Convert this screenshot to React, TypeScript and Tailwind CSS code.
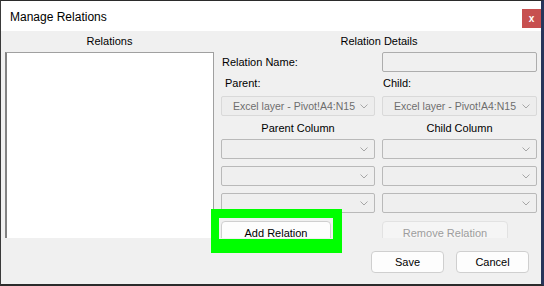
import React from 'react';

const font = { fontFamily: '"Liberation Sans", Arial, sans-serif' };

// Chevron of a Windows combo box
const Chevron: React.FC = () => (
  <svg width="8" height="5" viewBox="0 0 8 5" className="shrink-0">
    <polyline points="0.5,0.5 4,4 7.5,0.5" fill="none" stroke="#a6a6a6" strokeWidth="1" />
  </svg>
);

const Combo: React.FC<{ text?: string; muted?: boolean }> = ({ text, muted }) => (
  <div
    className={`h-[20px] rounded-[2px] border flex items-center justify-between pl-[11px] pr-[6px] ${
      muted ? 'border-[#d9d9d9] bg-[#ededed]' : 'border-[#b9b9b9] bg-[#efefef]'
    }`}
  >
    <span className="text-[#6d6d6d] text-[10.5px] whitespace-nowrap">{text}</span>
    <Chevron />
  </div>
);

const Button: React.FC<{ label: string; disabled?: boolean; className?: string }> = ({ label, disabled, className }) => (
  <div
    className={`h-[22px] rounded-[4px] border flex items-center justify-center ${
      disabled ? 'border-[#e2e2e2] bg-[#f5f5f5] text-[#9d9d9d]' : 'border-[#cfcfcf] bg-[#fdfdfd] text-black'
    } ${className ?? ''}`}
  >
    {label}
  </div>
);

export default function App() {
  return (
    <div
      className="relative w-[544px] h-[286px] flex flex-col border-t border-l border-r-[3px] border-b-[2px] border-t-[#2b2b2b] border-l-[#3a3a3a] border-r-[#27345a] border-b-[#2b2b2b] bg-[#f0f0f0] text-[11px] leading-[14px] text-black overflow-hidden"
      style={font}
    >
      {/* Title bar */}
      <div className="h-[30px] bg-white flex items-start justify-between shrink-0">
        <span className="pl-[9px] pt-[9px] text-[12px] leading-[15px]">Manage Relations</span>
        <div className="mt-[8px] w-[19px] h-[19px] bg-[#c75050] flex items-center justify-center text-white text-[10px] font-bold leading-none">
          x
        </div>
      </div>

      {/* Upper panel, clipped at the bottom */}
      <div className="h-[207px] overflow-hidden flex shrink-0">
        <div className="ml-[4px] w-[209px] flex flex-col">
          <div className="mt-[3px] h-[14px] text-center">Relations</div>
          <div className="mt-[4px] flex-1 bg-white border-t border-r border-l-2 border-t-[#a0a0a0] border-r-[#a0a0a0] border-l-[#828282]" />
        </div>

        <div className="ml-[7px] w-[316px] flex flex-col">
          <div className="mt-[3px] h-[14px] text-center">Relation Details</div>

          <div className="mt-[4px] grid grid-cols-[154px_155px] gap-x-[7px]">
            <div className="h-[20px] flex items-center pl-[1px]">Relation Name:</div>
            <div className="h-[20px] rounded-[2px] border border-[#adadad] bg-[#f0f0f0]" />
          </div>

          <div className="mt-[4px] grid grid-cols-[154px_155px] gap-x-[7px]">
            <div className="pl-[4px]">Parent:</div>
            <div className="pl-[1px]">Child:</div>
          </div>

          <div className="mt-[6px] grid grid-cols-[154px_155px] gap-x-[7px]">
            <Combo text="Excel layer - Pivot!A4:N15" muted />
            <Combo text="Excel layer - Pivot!A4:N15" muted />
          </div>

          <div className="mt-[5px] grid grid-cols-[154px_155px] gap-x-[7px] text-center">
            <div>Parent Column</div>
            <div>Child Column</div>
          </div>

          <div className="mt-[4px] grid grid-cols-[154px_155px] gap-x-[7px] gap-y-[7px]">
            <Combo />
            <Combo />
            <Combo />
            <Combo />
            <Combo />
            <Combo />
          </div>

          <div className="mt-[8px] flex">
            <Button label="Add Relation" className="w-[110px] h-[23px]" />
            <Button label="Remove Relation" disabled className="ml-[51px] w-[126px] h-[23px]" />
          </div>
        </div>
      </div>

      {/* Dialog buttons */}
      <div className="flex-1 flex justify-end items-start pt-[13px] pr-[12px] gap-[12px]">
        <Button label="Save" className="w-[73px]" />
        <Button label="Cancel" className="w-[73px]" />
      </div>

      {/* Green highlight annotation */}
      <div className="absolute left-[210px] top-[208px] w-[131px] h-[44px] border-[#00ff00] border-l-[8px] border-t-[9px] border-r-[9px] border-b-[14px]" />
    </div>
  );
}
